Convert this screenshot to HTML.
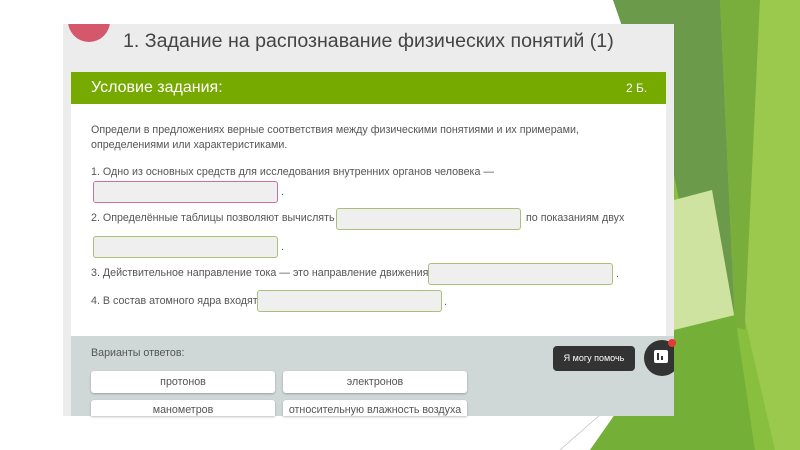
<!DOCTYPE html>
<html><head><meta charset="utf-8"><style>
*{margin:0;padding:0;box-sizing:border-box}
body{width:800px;height:450px;overflow:hidden;background:#fff;position:relative;font-family:"Liberation Sans","Noto Sans CJK SC",sans-serif;color:#555}
.a{position:absolute}
.t{font-size:10.7px;color:#555;white-space:nowrap}
.in{position:absolute;height:22px;background:#efefef;border:1.5px solid #a9bf7a;border-radius:3px}
.btn{position:absolute;height:22px;background:#fff;border-radius:3px;box-shadow:0 1px 2px rgba(0,0,0,.25);font-size:10.7px;text-align:center;line-height:22px;color:#555}
</style></head><body>
<svg class="a" style="left:0;top:0" width="800" height="450">
<polygon points="613,0 800,0 800,450 590,450 674,330 674,175" fill="#88bf3e"/>
<polygon points="613,0 720,0 735,327 700,300 674,175" fill="#6b9a4a"/>
<polygon points="720,0 760,0 745,330 735,327" fill="#7aae3c"/>
<polygon points="760,0 800,0 800,450 775,450 745,320" fill="#9bc94e"/>
<polygon points="674,200 712,190 735,320 674,330" fill="#cfe3a0"/>
<polygon points="674,330 735,315 755,450 590,450" fill="#74af38"/>
<line x1="560" y1="450" x2="674" y2="350" stroke="#bbb" stroke-width="0.7"/>
</svg>
<div class="a" style="left:63px;top:24px;width:611px;height:392px;background:#ececec"></div>
<div class="a" style="left:68px;top:0;width:42px;height:42px;border-radius:50%;background:#d4576b;clip-path:inset(24px 0 0 0)"></div>
<div class="a" style="left:123px;top:30px;font-size:19.6px;color:#444;white-space:nowrap">1. Задание на распознавание физических понятий (1)</div>
<div class="a" style="left:71px;top:72px;width:595px;height:32px;background:#77aa00"></div>
<div class="a" style="left:91px;top:79px;font-size:16px;color:#fff">Условие задания:</div>
<div class="a" style="left:626px;top:81px;font-size:12px;color:#fff">2 Б.</div>
<div class="a" style="left:71px;top:104px;width:595px;height:232px;background:#fff"></div>
<div class="a" style="left:71px;top:336px;width:603px;height:80px;background:#cfd7d7"></div>
<div class="a t" style="left:91px;top:124px">Определи в предложениях верные соответствия между физическими понятиями и их примерами,</div>
<div class="a t" style="left:91px;top:139px">определениями или характеристиками.</div>
<div class="a t" style="left:91px;top:166px">1. Одно из основных средств для исследования внутренних органов человека —</div>
<div class="in" style="left:93px;top:181px;width:185px;border-color:#d070a0"></div>
<div class="a t" style="left:281px;top:186px">.</div>
<div class="a t" style="left:91px;top:212px">2. Определённые таблицы позволяют вычислять</div>
<div class="in" style="left:336px;top:208px;width:185px"></div>
<div class="a t" style="left:526px;top:212px">по показаниям двух</div>
<div class="in" style="left:93px;top:236px;width:185px"></div>
<div class="a t" style="left:281px;top:241px">.</div>
<div class="a t" style="left:91px;top:267px">3. Действительное направление тока — это направление движения</div>
<div class="in" style="left:428px;top:263px;width:185px"></div>
<div class="a t" style="left:616px;top:268px">.</div>
<div class="a t" style="left:91px;top:295px">4. В состав атомного ядра входят</div>
<div class="in" style="left:257px;top:290px;width:185px"></div>
<div class="a t" style="left:444px;top:296px">.</div>
<div class="a t" style="left:91px;top:347px">Варианты ответов:</div>
<div class="btn" style="left:91px;top:371px;width:184px">протонов</div>
<div class="btn" style="left:283px;top:371px;width:184px">электронов</div>
<div class="btn" style="left:91px;top:400px;width:184px;height:16px;line-height:20px;border-radius:3px 3px 0 0">манометров</div>
<div class="btn" style="left:283px;top:400px;width:184px;height:16px;line-height:20px;border-radius:3px 3px 0 0">относительную влажность воздуха</div>
<div class="a" style="left:553px;top:346px;width:82px;height:25px;background:#333;border-radius:4px;color:#fff;font-size:9px;text-align:center;line-height:25px">Я могу помочь</div>
<div class="a" style="left:644px;top:340px;width:36px;height:36px;border-radius:50%;background:#333;clip-path:inset(0 6px 0 0)"></div>
<div class="a" style="left:654px;top:350px;width:14px;height:13px;background:#fff;border-radius:2px"></div>
<div class="a" style="left:657px;top:353px;width:2px;height:7px;background:#333"></div>
<div class="a" style="left:661px;top:356px;width:2px;height:4px;background:#333"></div>
<div class="a" style="left:668px;top:339px;width:8px;height:8px;border-radius:50%;background:#e53935"></div>
</body></html>
